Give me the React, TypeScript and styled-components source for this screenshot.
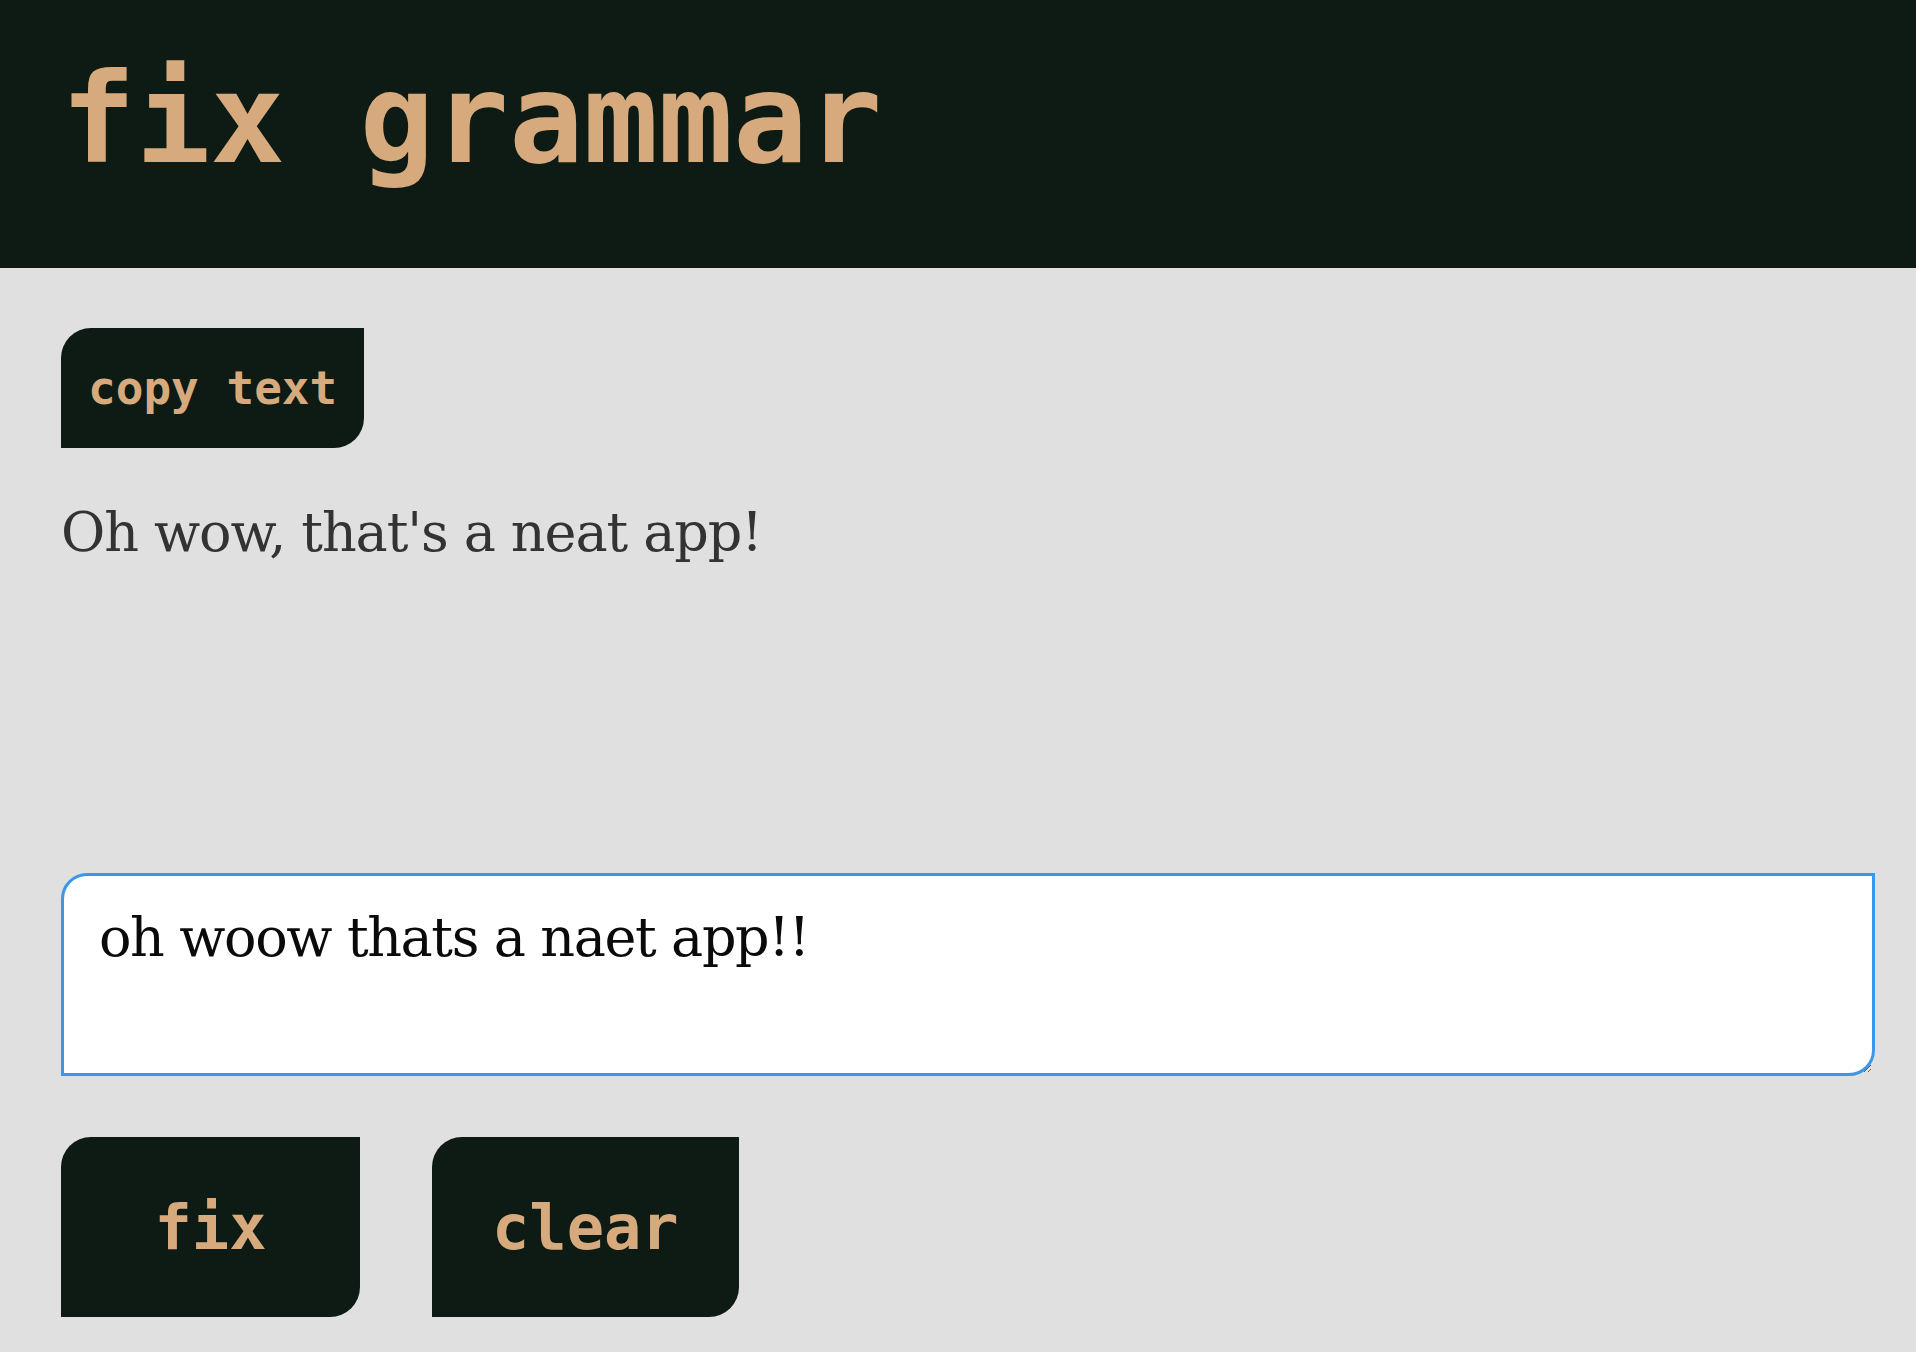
import React, { useState } from "react";
import styled, { createGlobalStyle, css } from "styled-components";

const GlobalStyle = createGlobalStyle`
  html, body {
    margin: 0;
    padding: 0;
    background: #e0e0e0;
  }
  * {
    box-sizing: border-box;
  }
`;

const DARK = "#0e1a14";
const TAN = "#d6aa7c";
const MONO = `"DejaVu Sans Mono", "Liberation Mono", monospace`;
const SERIF = `"DejaVu Serif", "Liberation Serif", serif`;

const Header = styled.header`
  height: 268px;
  background: ${DARK};
  padding: 57px 61px 0;
`;

const Title = styled.h1`
  margin: 0;
  font-family: ${MONO};
  font-weight: 700;
  font-size: 124px;
  line-height: 1;
  color: ${TAN};
  white-space: pre;
`;

const Main = styled.main`
  display: flex;
  flex-direction: column;
  align-items: flex-start;
  padding: 60px 41px 40px 61px;
`;

const Button = styled.button<{ $size: "small" | "large" }>`
  display: inline-flex;
  align-items: center;
  justify-content: center;
  border: none;
  background: ${DARK};
  color: ${TAN};
  font-family: ${MONO};
  font-weight: 700;
  border-radius: 30px 0 30px 0;
  cursor: pointer;
  white-space: pre;
  ${(p) =>
    p.$size === "small"
      ? css`
          height: 120px;
          padding: 0 27px;
          font-size: 46px;
        `
      : css`
          height: 180px;
          min-width: 299px;
          padding: 0 60px;
          font-size: 62px;
        `}
`;

const Output = styled.p`
  margin: 58px 0 0;
  height: 367px;
  font-family: ${SERIF};
  font-size: 54px;
  line-height: 1;
  letter-spacing: -1.1px;
  color: #333333;
`;

const Input = styled.textarea`
  display: block;
  width: 100%;
  height: 203px;
  padding: 30px 35px;
  border: 3px solid #3d97e8;
  border-radius: 26px 0 26px 0;
  background: #ffffff;
  color: #0a0a0a;
  font-family: ${SERIF};
  font-size: 54px;
  letter-spacing: -1.4px;
  outline: none;
`;

const ButtonRow = styled.div`
  display: flex;
  gap: 72px;
  margin-top: 61px;
`;

export default function App() {
  const [text, setText] = useState("oh woow thats a naet app!!");
  return (
    <>
      <GlobalStyle />
      <Header>
        <Title>fix grammar</Title>
      </Header>
      <Main>
        <Button $size="small">copy text</Button>
        <Output>Oh wow, that's a neat app!</Output>
        <Input value={text} onChange={(e) => setText(e.target.value)} />
        <ButtonRow>
          <Button $size="large">fix</Button>
          <Button $size="large" onClick={() => setText("")}>
            clear
          </Button>
        </ButtonRow>
      </Main>
    </>
  );
}
